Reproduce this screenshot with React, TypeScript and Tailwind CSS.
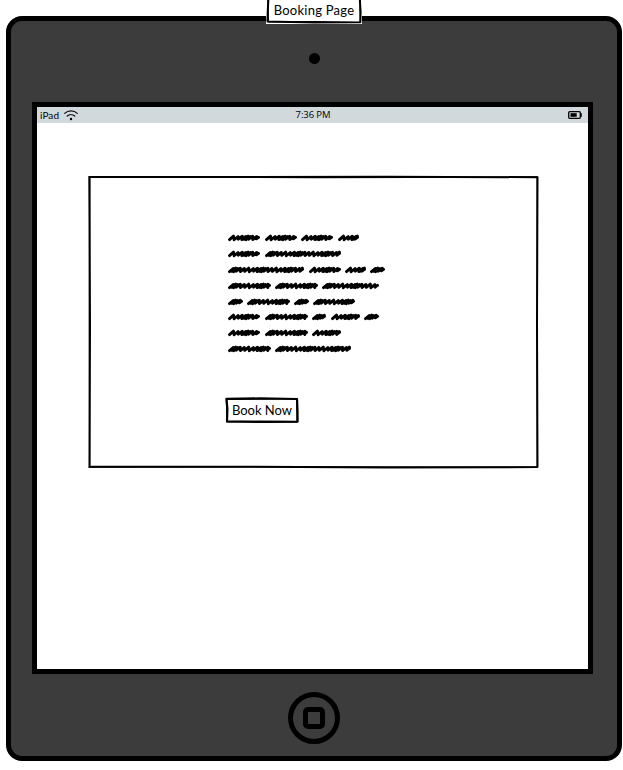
const lines: number[][][] = [
  [[228, 260], [265, 297], [301, 333], [338, 359]],
  [[228, 260], [265, 341]],
  [[228, 304], [309, 341], [345, 366], [370, 385]],
  [[228, 271], [275, 318], [322, 379]],
  [[228, 243], [247, 290], [294, 309], [313, 355]],
  [[228, 260], [265, 308], [312, 326], [331, 360], [364, 379]],
  [[228, 260], [265, 308], [312, 341]],
  [[228, 271], [275, 351]],
];

const steps = [4.6, 4.2, 3.6, 2.2, 2, 2.6, 4, 4.4];

// One slanted pen stroke after another, with an uneven pitch.
function scribble(width: number) {
  const dense = width < 18 || (width > 40 && width < 60) || width > 70;
  let x = 1.5;
  let i = dense ? 3 : 0;
  let d = `M${x} 5.6`;
  while (x < width - 4) {
    const lift = [0, 0.5, 0.1, 0.4][i % 4];
    const top = Math.min(x + 4, width - 1.6);
    d += ` L${top.toFixed(1)} ${(2.1 + lift).toFixed(1)}`;
    x += steps[i % steps.length];
    i += 1;
    if (x < width - 3) d += ` L${x.toFixed(1)} ${(5.7 - lift).toFixed(1)}`;
  }
  return d + ` L${width - 3.6} 4.9 L${width - 1.5} 3.4`;
}

function Word({ width }: { width: number }) {
  return (
    <svg className="block shrink-0" width={width} height="8" viewBox={`0 0 ${width} 8`} fill="none" stroke="#000" strokeWidth="2.9" strokeLinecap="round" strokeLinejoin="round">
      <path d={scribble(width)} />
    </svg>
  );
}

function StatusBar() {
  return (
    <div className="grid h-4 grid-cols-[1fr_auto_1fr] items-center bg-[#d1d9dc] pr-[6px] pl-[3px] text-[10px] leading-4">
      <div className="flex items-center gap-[4px]">
        <span className="-mt-px w-5 tracking-[0.1px] whitespace-nowrap">iPad</span>
        <svg width="14" height="11" viewBox="0 0 14 11" fill="none" stroke="#111" strokeWidth="1.2" strokeLinecap="round">
          <path d="M.7 3.4C4.1.1 9.9.1 13.3 3.4M3.2 6c2.2-2 5.4-2 7.6 0" />
          <circle cx="7" cy="9" r="1.2" fill="#000" stroke="none" />
        </svg>
      </div>
      <span className="-mt-px ml-[4px] text-center font-['Open_Sans',sans-serif] text-[9.5px] tracking-[-0.1px] whitespace-nowrap">7:36 PM</span>
      <svg className="justify-self-end" width="14" height="8" viewBox="0 0 14 8" fill="none">
        <rect x=".7" y=".7" width="11.6" height="6.6" rx="1" stroke="#000" strokeWidth="1.3" />
        <path d="M13 2.3v3.4" stroke="#000" strokeWidth="1.6" />
        <path d="M2.5 2.2h6.2v3.6H2.5z" fill="#000" />
      </svg>
    </div>
  );
}

export default function App() {
  return (
    <div className="relative h-[770px] w-[623px] overflow-hidden bg-white pt-4 pl-[6px] font-['Lato','Open_Sans',sans-serif] text-black">
      <div className="flex h-[745px] w-[616px] flex-col items-center rounded-[16px] border-[5px] border-black bg-[#3c3c3c]">
        <div className="mt-8 h-[11px] w-[11px] rounded-full bg-black" />
        <div className="mt-[38px] -ml-[3px] h-[572px] w-[561px] shrink-0 border-[5px] border-black bg-white">
          <StatusBar />
          <div className="mt-[52px] ml-[50px] grid h-[294px] w-[453px]">
            <svg className="col-start-1 row-start-1" width="453" height="294" viewBox="0 0 453 294" fill="none" stroke="#000" strokeWidth="2" strokeLinejoin="round" strokeLinecap="round">
              <path d="M2.3 2 150 2.1 300 1.8 450.5 2.2 450 150 450.4 292.1 300 292.5 150 291.7 2.5 291.8 3 150z" />
              <path d="M2 1.8 230 2.7 450 2M450.2 2 450.5 291.7M449 292.2 225 291.8 2 292.2M2.6 290 2.3 150 2.8 3" strokeWidth="1.3" />
            </svg>
            <div className="col-start-1 row-start-1 flex flex-col items-start pt-[55.5px] pl-[138px]">
              <div className="flex flex-col pl-[3px]">
                {lines.map((words, r) => (
                  <div key={r} className="flex h-[15.8px] items-center">
                    {words.map(([start, end], i) => (
                      <div key={i} style={{ marginLeft: i ? start - words[i - 1][1] : 0 }}>
                        <Word width={end - start} />
                      </div>
                    ))}
                  </div>
                ))}
              </div>
              <button className="mt-[40.5px] grid h-[26px] w-[74px] place-items-center">
                <svg className="col-start-1 row-start-1" width="74" height="26" viewBox="0 0 74 26" fill="none" stroke="#000" strokeWidth="2.2" strokeLinejoin="round">
                  <path d="M1.5 1.9 35 1.4 72 2 72.5 14 72.6 24.6 38 25 2 24.3 2.4 12z" />
                  <path d="M1.4 2.2 37 2 71.8 1.6 72.2 24.8 36 24.3 1.7 24.7 1.8 12z" strokeWidth="1.4" />
                </svg>
                <span className="col-start-1 row-start-1 text-[13px] leading-4 whitespace-nowrap">Book Now</span>
              </button>
            </div>
          </div>
        </div>
        <div className="mt-[18px] flex h-[52px] w-[52px] shrink-0 items-center justify-center rounded-full border-[5px] border-black">
          <div className="h-[22px] w-[22px] rounded-[5px] border-[5px] border-black" />
        </div>
      </div>
      <div className="absolute top-0 left-[266px] grid h-6 w-[96px] place-items-center bg-white">
        <svg className="col-start-1 row-start-1" width="96" height="24" viewBox="0 0 96 24" fill="none" stroke="#000" strokeWidth="2" strokeLinejoin="round">
          <path d="M2.4-1 1.7 12 1.5 21.5 48 22.4 94.3 22.2 94.6 12 93.8-1" />
          <path d="M2-1 2.4 21.8 50 21.7 94.5 22.5 94 10 94.5-1" strokeWidth="1.2" />
        </svg>
        <span className="col-start-1 row-start-1 mb-[5px] text-[13px] leading-4 tracking-[0.25px] whitespace-nowrap">Booking Page</span>
      </div>
    </div>
  );
}
